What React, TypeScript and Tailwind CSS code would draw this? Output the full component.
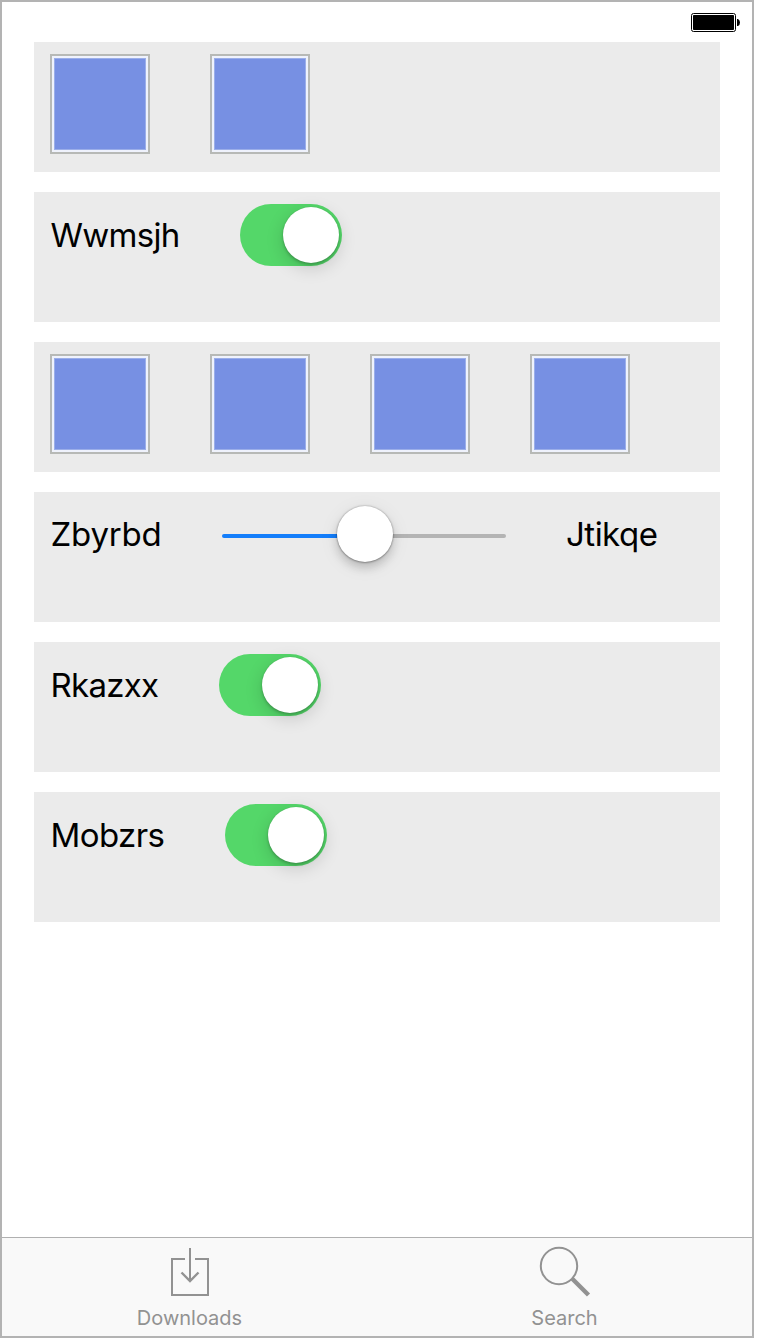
import type { ReactNode } from "react";

function Row({ children }: { children?: ReactNode }) {
  return <div className="flex h-[130px] w-[686px] items-start bg-[#ebebeb] pt-3 pl-4">{children}</div>;
}

function Tile() {
  return (
    <div className="h-[100px] w-[100px] border-2 border-[#b7b9b6] bg-[#eff2fc] p-[2px]">
      <div className="h-full w-full border border-[#9baee9] bg-[#7790e3]" />
    </div>
  );
}

function Tiles({ count }: { count: number }) {
  return (
    <div className="flex gap-[60px]">
      {Array.from({ length: count }, (_, i) => (
        <Tile key={i} />
      ))}
    </div>
  );
}

function Switch() {
  return (
    <div className="flex h-[62px] w-[102px] items-center justify-end rounded-full bg-[#54d769] pr-[3px]">
      <div className="h-14 w-14 shrink-0 rounded-full bg-white shadow-[0_0_1px_rgba(0,0,0,0.18),0_2px_3px_rgba(0,0,0,0.20),0_5px_18px_rgba(0,0,0,0.16)]" />
    </div>
  );
}

function Slider() {
  return (
    <div className="flex h-14 w-[284px] items-center">
      <div className="mt-1 h-1 w-[115px] rounded-l-full bg-[#147efb]" />
      <div className="relative h-14 w-14 shrink-0 rounded-full bg-white shadow-[0_0_2px_rgba(0,0,0,0.35),0_1px_2px_rgba(0,0,0,0.22),0_6px_10px_rgba(0,0,0,0.16),0_4px_20px_rgba(0,0,0,0.08)]" />
      <div className="mt-1 h-1 w-[113px] rounded-r-full bg-[#b4b4b4]" />
    </div>
  );
}

function Battery() {
  return (
    <svg className="h-5 w-[50px]" viewBox="0 0 50 20" aria-label="Battery full">
      <rect x="0.5" y="0.5" width="44" height="18" rx="2" fill="white" stroke="black" />
      <rect x="2" y="2" width="41" height="15" rx="0.8" fill="black" />
      <path d="M46 6h1q2 1 2 3.5T47 13h-1z" fill="black" />
    </svg>
  );
}

export default function App() {
  return (
    <div className="flex h-[1340px] w-[760px] items-start bg-white font-['Inter',sans-serif] text-black">
      <div className="flex h-[1338px] w-[754px] flex-col border-2 border-[#b3b3b3] bg-white">
        <header className="flex h-10 shrink-0 justify-end pt-[11px] pr-[11px]">
          <Battery />
        </header>
        <main className="flex flex-1 flex-col gap-5 pl-8 text-[33px] leading-10">
          <Row>
            <Tiles count={2} />
          </Row>
          <Row>
            <div className="flex items-center">
              <span className="w-[190px] pl-[0.5px] tracking-[-0.7px]">Wwmsjh</span>
              <Switch />
            </div>
          </Row>
          <Row>
            <Tiles count={4} />
          </Row>
          <Row>
            <div className="mt-0.5 flex items-center">
              <span className="w-[172px] pl-[0.5px] tracking-[-0.2px]">Zbyrbd</span>
              <Slider />
              <span className="ml-[60px] tracking-[-0.5px]">Jtikqe</span>
            </div>
          </Row>
          <Row>
            <div className="flex items-center">
              <span className="w-[169px] pl-[0.5px] tracking-[-0.7px]">Rkazxx</span>
              <Switch />
            </div>
          </Row>
          <Row>
            <div className="flex items-center">
              <span className="w-[175px] pl-[0.5px] tracking-[-0.6px]">Mobzrs</span>
              <Switch />
            </div>
          </Row>
        </main>
        <nav className="grid h-[99px] shrink-0 grid-cols-2 border-t border-[#b0b0b0] bg-[#f9f9f9] text-[20px] leading-6 text-[#929292]">
          <div className="flex flex-col items-center pt-[9px]">
            <svg className="h-[50px] w-10" viewBox="0 0 40 50" fill="none" stroke="currentColor" strokeWidth="2">
              <path d="M15 12H2v36h36V12H25M20 1v33" />
              <path d="m11.5 25.5 8.5 8.5 8.5-8.5" strokeWidth="2.4" />
            </svg>
            <span className="mt-[9px]">Downloads</span>
          </div>
          <div className="flex flex-col items-center pt-2">
            <svg className="h-[51px] w-[52px]" viewBox="1 0 52 51" fill="none" stroke="currentColor">
              <circle cx="21" cy="20" r="18.2" strokeWidth="2" />
              <path d="M34 32.5 50.5 49" strokeWidth="4.4" />
            </svg>
            <span className="mt-[9px]">Search</span>
          </div>
        </nav>
      </div>
    </div>
  );
}
